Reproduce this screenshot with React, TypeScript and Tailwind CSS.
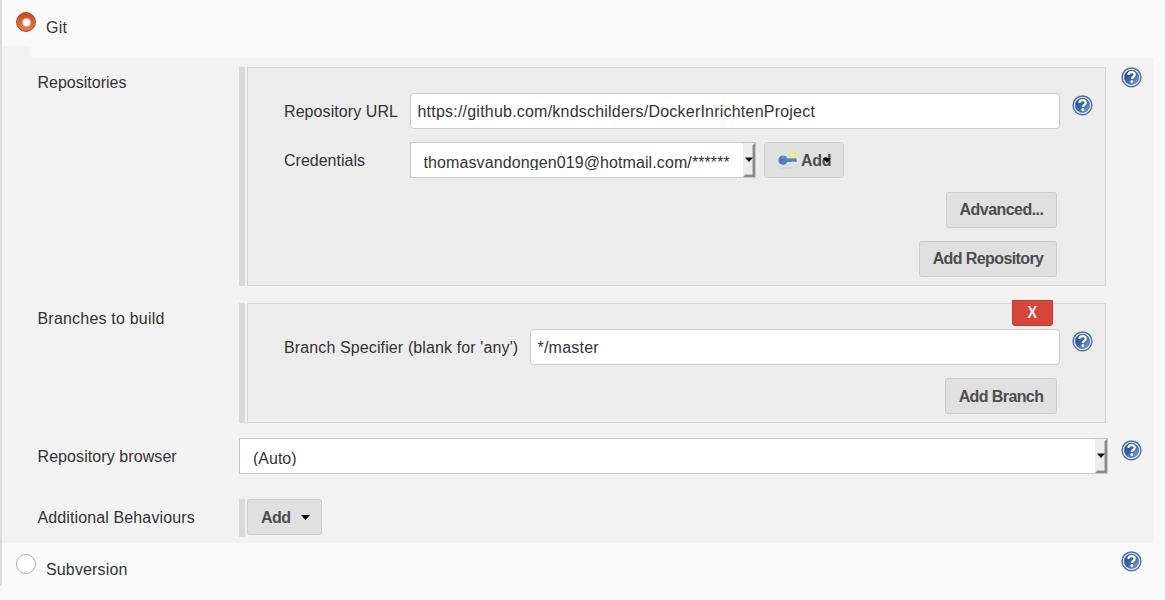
import type { ReactNode } from "react";

function HelpIcon({ className = "" }: { className?: string }) {
  return (
    <svg className={`h-[21px] w-[21px] shrink-0 ${className}`} viewBox="0 0 21 21" role="img" aria-label="Help">
      <defs>
        <linearGradient id="help-fill" x1="0" y1="0" x2="1" y2="1">
          <stop offset="0" stopColor="#1f4388" />
          <stop offset="0.5" stopColor="#3b66a9" />
          <stop offset="1" stopColor="#86aedb" />
        </linearGradient>
      </defs>
      <circle cx="10.500" cy="10.300" r="9.400" fill="#eef3fa" stroke="#4f72a8" strokeWidth="1.500" />
      <circle cx="10.500" cy="10.300" r="7.200" fill="url(#help-fill)" stroke="#3f659f" strokeWidth="0.600" />
      <path d="M7.400 8C7.500 6 8.700 5.200 10.500 5.200c1.900 0 3.200.8 3.200 2.500 0 2-2.800 2.200-2.800 4.300" fill="none" stroke="#fff" strokeWidth="2.300" />
      <circle cx="10.800" cy="14.700" r="1.400" fill="#fff" />
    </svg>
  );
}

function KeyIcon() {
  return (
    <svg className="h-[20px] w-[20px] shrink-0" viewBox="0 0 20 20" aria-hidden="true">
      <ellipse cx="10" cy="18" rx="6.500" ry="0.700" fill="#d0d0d0" />
      <circle cx="15.500" cy="4.800" r="3" fill="#f3ec5e" />
      <circle cx="15.500" cy="4.800" r="1.300" fill="#fff8a4" />
      <path d="M6.200 5.600a4.600 4.600 0 0 1 4.100 2.400H18.300l1.300 1.200v2.800h-1.600l-.7-.8-1 .8-1-.8-1 .8H10.300A4.600 4.600 0 1 1 6.200 5.600Z" fill="#4f80be" />
      <path d="M3.600 8c1.500-1.700 4-1.500 5.300.5H18" fill="none" stroke="#7ba5d7" strokeWidth="1" />
      <circle cx="4.100" cy="10.200" r="1" fill="#3a659f" />
    </svg>
  );
}

function Caret({ className = "h-[5px] w-[9px]" }: { className?: string }) {
  return (
    <svg className={`shrink-0 ${className}`} viewBox="0 0 9 5" preserveAspectRatio="none" aria-hidden="true">
      <path d="M0 0H9L4.500 5Z" fill="#0b0b0b" />
    </svg>
  );
}

function Button({ children, className = "" }: { children: ReactNode; className?: string }) {
  return (
    <button
      type="button"
      className={`flex h-9 shrink-0 items-center rounded-[3px] border border-[#cccccc] bg-[#e0e0e0] font-bold text-[#4d4d4d] ${className}`}
    >
      {children}
    </button>
  );
}

function SelectBox({ children, className = "" }: { children: ReactNode; className?: string }) {
  return (
    <div className={`flex h-9 justify-between border border-[#c6c6c6] bg-white ${className}`}>
      <div className="mt-[9px] h-[18px] overflow-hidden leading-[22px] whitespace-nowrap">{children}</div>
      <svg className="h-[34px] w-[12px] shrink-0" viewBox="0 0 12 34" aria-hidden="true">
        <path d="M0 0H12V34H0Z" fill="#ececec" />
        <path d="M12 0V34H0L2.500 31.500H9.500V2.500Z" fill="#8b8b8b" />
        <path d="M2 14.500H10L6 19Z" fill="#0b0b0b" />
      </svg>
    </div>
  );
}

function TextField({ value, className = "" }: { value: string; className?: string }) {
  return (
    <div className={`flex h-9 shrink-0 items-center rounded-[4px] border border-[#cccccc] bg-white pt-[2px] pl-[6.500px] tracking-[0.215px] whitespace-nowrap ${className}`}>
      {value}
    </div>
  );
}

function Handle() {
  return <div className="mr-[2px] w-[6px] shrink-0 bg-[#d9d9d9]" />;
}

function Label({ children, className = "" }: { children: ReactNode; className?: string }) {
  return <div className={`w-[201.500px] shrink-0 leading-6 whitespace-nowrap ${className}`}>{children}</div>;
}

export default function App() {
  return (
    <div className="h-[600px] w-[1165px] overflow-hidden bg-[#f9f9f9] font-['Liberation_Sans',Arial,sans-serif] text-[16px] leading-6 text-[#333333]">
      <div className="h-[586px] border-l-2 border-[#dcdcdc]">
        <div className="flex h-[46px] items-start pl-[14px]">
          <div className="mt-3 flex h-5 w-5 items-center justify-center rounded-full border border-[#b34a25] bg-linear-to-b from-[#c54a20] to-[#e57b50]">
            <div className="h-[7px] w-[7px] rounded-full bg-white shadow-[0_0_1px_1px_#edb398]" />
          </div>
          <span className="mt-4 ml-[10px] tracking-[0.2px]">Git</span>
        </div>
        <div className="h-3 w-[29px] bg-[#f2f2f2]" />

        <div className="h-[485px] w-[1152px] bg-[#f2f2f2] pt-[9px] pl-[35.500px]">
          <section className="flex h-[219px]">
            <Label className="pt-1">Repositories</Label>
            <Handle />
            <div className="h-[219px] w-[859px] border border-[#d5d5d5] bg-[#ececec] pt-[25px] pl-[36px]">
              <div className="flex h-[49px] items-start">
                <span className="w-[126px] shrink-0 pt-[7px] tracking-[0.080px]">Repository URL</span>
                <TextField value="https://github.com/kndschilders/DockerInrichtenProject" className="w-[650px]" />
                <HelpIcon className="mt-[2px] ml-3" />
              </div>
              <div className="flex h-[50px] items-start">
                <span className="w-[126px] shrink-0 pt-[7px]">Credentials</span>
                <SelectBox className="w-[346px] pl-[12.500px] tracking-[0.100px]">thomasvandongen019@hotmail.com/******</SelectBox>
                <Button className="ml-2 w-20 pl-3">
                  <KeyIcon />
                  <span className="ml-[4px] pt-px tracking-[-0.300px]">Add</span>
                  <Caret className="-ml-[8px] h-[5px] w-[8px]" />
                </Button>
              </div>
              <div className="flex w-[773px] flex-col items-end gap-[13px]">
                <Button className="w-[111px] justify-center tracking-[-0.540px]">Advanced...</Button>
                <Button className="w-[138px] justify-center tracking-[-0.600px]">Add Repository</Button>
              </div>
            </div>
            <HelpIcon className="ml-[15px]" />
          </section>

          <section className="mt-[17px] flex h-[120px]">
            <Label className="pt-1 tracking-[0.200px]">Branches to build</Label>
            <Handle />
            <div className="relative h-[120px] w-[859px] border border-[#d5d5d5] bg-[#ececec] pt-[25px] pl-[36px]">
              <button type="button" className="absolute -top-[4px] right-[52px] h-[26px] w-[41px] rounded-b-[3px] border border-[#c23b2d] bg-[#d4473a] font-bold text-[#f7eeee]">
                <span className="inline-block scale-x-90">X</span>
              </button>
              <div className="flex h-[49px] items-start">
                <span className="w-[246px] shrink-0 pt-[7px] tracking-[0.120px] whitespace-nowrap">Branch Specifier (blank for 'any')</span>
                <TextField value="*/master" className="w-[530px]" />
                <HelpIcon className="mt-[2px] ml-3" />
              </div>
              <div className="flex w-[773px] justify-end">
                <Button className="w-[112px] justify-center pt-px tracking-[-0.600px]">Add Branch</Button>
              </div>
            </div>
          </section>

          <section className="mt-[15px] flex h-9">
            <Label className="pt-[7px] tracking-[0.080px]">Repository browser</Label>
            <SelectBox className="w-[869px] pl-[13px]">(Auto)</SelectBox>
            <HelpIcon className="mt-[2px] ml-[13px]" />
          </section>

          <section className="mt-[25px] flex h-[38px]">
            <Label className="pt-[7px] tracking-[0.120px]">Additional Behaviours</Label>
            <Handle />
            <Button className="w-[75px] pl-[13px]">
              <span className="pt-px tracking-[-0.500px]">Add</span>
              <Caret className="ml-[10px] h-[5px] w-[9px]" />
            </Button>
          </section>
        </div>

        <div className="flex h-[43px] items-start pl-[14px]">
          <div className="mt-[11px] h-5 w-5 rounded-full border-[1.500px] border-[#b0b0b0] bg-white" />
          <span className="mt-[15px] ml-[10px] w-[200px] tracking-[0.150px]">Subversion</span>
          <HelpIcon className="mt-[8px] ml-[875px]" />
        </div>
      </div>
    </div>
  );
}
